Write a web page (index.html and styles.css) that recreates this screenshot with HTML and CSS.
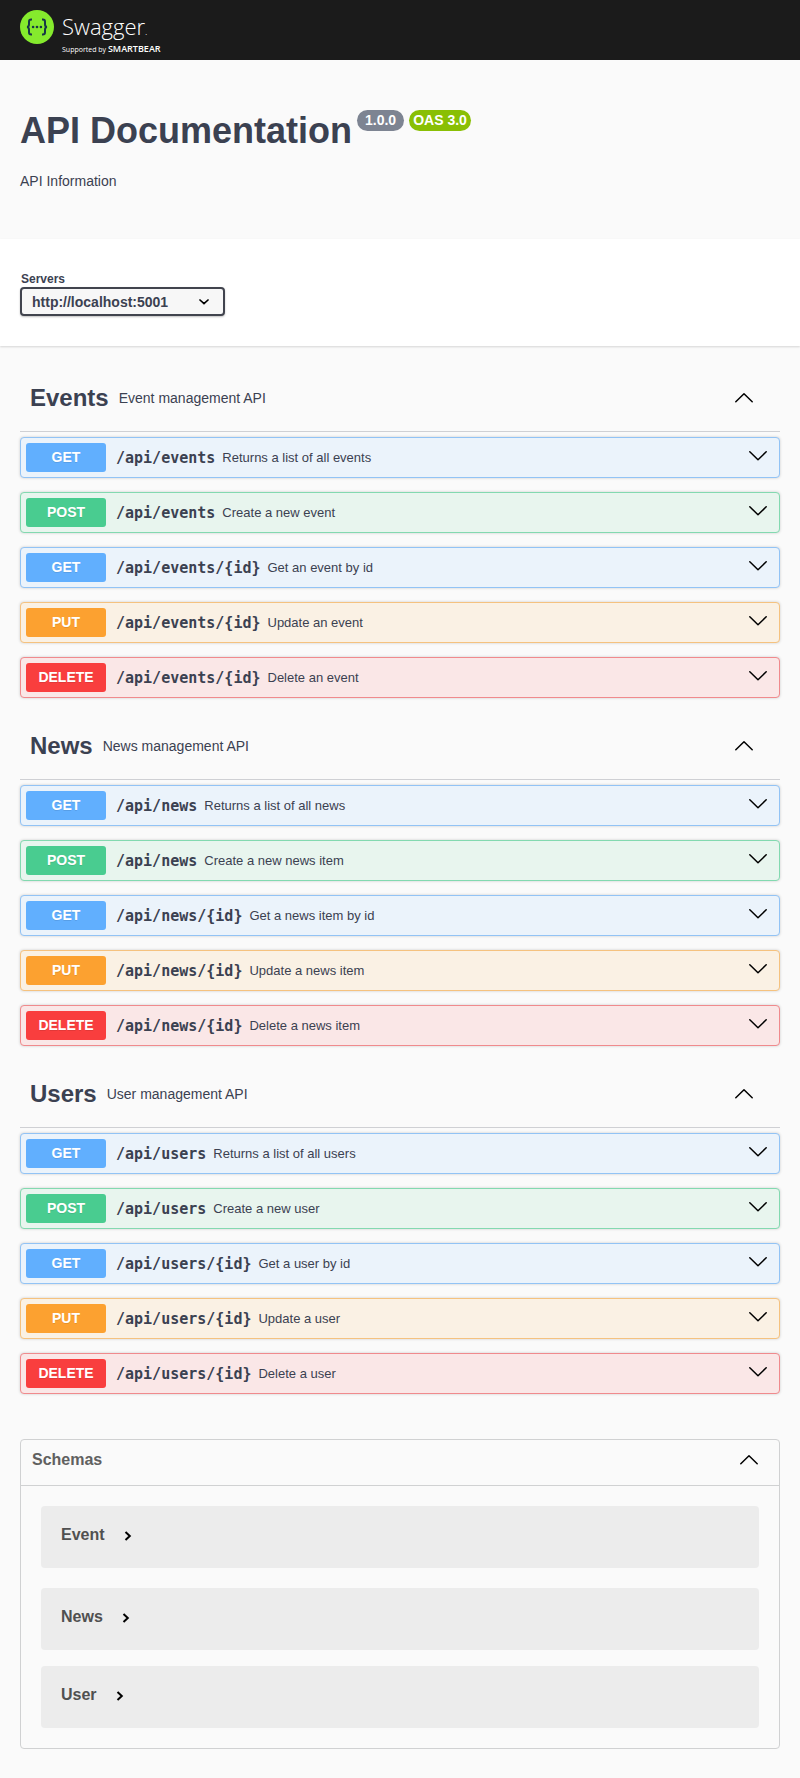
FILE: index.html
```html
<!DOCTYPE html>
<html lang="en">
<head>
<meta charset="utf-8">
<meta name="viewport" content="width=device-width, initial-scale=1">
<title>API Documentation</title>
<link rel="stylesheet" href="styles.css">
</head>
<body>
<svg class="sprite" aria-hidden="true">
  <symbol id="down" viewBox="0 0 20 20"><path d="M1.8 5.8 10 13.8 18.2 5.8" fill="none" stroke="#000" stroke-width="1.5" stroke-linecap="round" stroke-linejoin="round"/></symbol>
  <symbol id="up" viewBox="0 0 20 20"><path d="M1.8 13.8 10 5.8 18.2 13.8" fill="none" stroke="#000" stroke-width="1.5" stroke-linecap="round" stroke-linejoin="round"/></symbol>
  <symbol id="right" viewBox="0 0 10 10"><path d="M2.5 1 6.8 5 2.5 9" fill="none" stroke="#000" stroke-width="2"/></symbol>
</svg>

<header class="topbar">
  <a class="logo" href="#" aria-label="Swagger">
    <svg class="logo-mark" viewBox="0 0 34 34" aria-hidden="true">
      <circle cx="17" cy="17" r="17" fill="#85ea2d"/>
      <g fill="none" stroke="#173647" stroke-width="2">
        <path d="M12 9.5h-.8c-1.600 0-2.200.8-2.200 2.300v2.400c0 1.800-.6 2.700-2 2.800 1.400.1 2 1 2 2.800v2.400c0 1.500.6 2.300 2.200 2.300h.8"/>
        <path d="M22 9.500h.8c1.600 0 2.200.8 2.200 2.300v2.400c0 1.800.6 2.700 2 2.800-1.400.1-2 1-2 2.800v2.400c0 1.500-.6 2.300-2.200 2.300h-.8"/>
      </g>
      <g fill="#173647"><circle cx="13.100" cy="17" r="1.300"/><circle cx="17" cy="17" r="1.300"/><circle cx="20.900" cy="17" r="1.300"/></g>
    </svg>
    <span class="logo-text">
      <span class="logo-name">Swagger<span class="logo-dot">.</span></span>
      <span class="logo-by">Supported by <b class="logo-company">SMARTBEAR</b></span>
    </span>
  </a>
</header>

<main>
  <section class="info">
    <h1 class="title">API Documentation <span class="badges"><span class="badge">1.0.0</span><span class="badge badge-oas">OAS 3.0</span></span></h1>
    <p class="description">API Information</p>
  </section>

  <section class="servers">
    <label class="servers-label" for="server">Servers</label>
    <div class="select-box">
      <select class="select" id="server"><option>http://localhost:5001</option></select>
      <svg class="select-arrow" viewBox="0 0 10 6" aria-hidden="true"><path d="M1 1 5 4.700 9 1" fill="none" stroke="#000" stroke-width="1.700" stroke-linecap="round"/></svg>
    </div>
  </section>

  <div class="content">
    <section class="tag">
      <div class="tag-head">
        <h2 class="tag-name">Events</h2><p class="tag-text">Event management API</p>
        <button class="toggle" aria-label="Collapse Events"><svg class="chevron"><use href="#up"/></svg></button>
      </div>
      <div class="ops">
        <button class="op get"><span class="method">GET</span><span class="path">/api/events</span><span class="summary">Returns a list of all events</span><svg class="chevron"><use href="#down"/></svg></button>
        <button class="op post"><span class="method">POST</span><span class="path">/api/events</span><span class="summary">Create a new event</span><svg class="chevron"><use href="#down"/></svg></button>
        <button class="op get"><span class="method">GET</span><span class="path">/api/events/{id}</span><span class="summary">Get an event by id</span><svg class="chevron"><use href="#down"/></svg></button>
        <button class="op put"><span class="method">PUT</span><span class="path">/api/events/{id}</span><span class="summary">Update an event</span><svg class="chevron"><use href="#down"/></svg></button>
        <button class="op delete"><span class="method">DELETE</span><span class="path">/api/events/{id}</span><span class="summary">Delete an event</span><svg class="chevron"><use href="#down"/></svg></button>
      </div>
    </section>

    <section class="tag">
      <div class="tag-head">
        <h2 class="tag-name">News</h2><p class="tag-text">News management API</p>
        <button class="toggle" aria-label="Collapse News"><svg class="chevron"><use href="#up"/></svg></button>
      </div>
      <div class="ops">
        <button class="op get"><span class="method">GET</span><span class="path">/api/news</span><span class="summary">Returns a list of all news</span><svg class="chevron"><use href="#down"/></svg></button>
        <button class="op post"><span class="method">POST</span><span class="path">/api/news</span><span class="summary">Create a new news item</span><svg class="chevron"><use href="#down"/></svg></button>
        <button class="op get"><span class="method">GET</span><span class="path">/api/news/{id}</span><span class="summary">Get a news item by id</span><svg class="chevron"><use href="#down"/></svg></button>
        <button class="op put"><span class="method">PUT</span><span class="path">/api/news/{id}</span><span class="summary">Update a news item</span><svg class="chevron"><use href="#down"/></svg></button>
        <button class="op delete"><span class="method">DELETE</span><span class="path">/api/news/{id}</span><span class="summary">Delete a news item</span><svg class="chevron"><use href="#down"/></svg></button>
      </div>
    </section>

    <section class="tag">
      <div class="tag-head">
        <h2 class="tag-name">Users</h2><p class="tag-text">User management API</p>
        <button class="toggle" aria-label="Collapse Users"><svg class="chevron"><use href="#up"/></svg></button>
      </div>
      <div class="ops">
        <button class="op get"><span class="method">GET</span><span class="path">/api/users</span><span class="summary">Returns a list of all users</span><svg class="chevron"><use href="#down"/></svg></button>
        <button class="op post"><span class="method">POST</span><span class="path">/api/users</span><span class="summary">Create a new user</span><svg class="chevron"><use href="#down"/></svg></button>
        <button class="op get"><span class="method">GET</span><span class="path">/api/users/{id}</span><span class="summary">Get a user by id</span><svg class="chevron"><use href="#down"/></svg></button>
        <button class="op put"><span class="method">PUT</span><span class="path">/api/users/{id}</span><span class="summary">Update a user</span><svg class="chevron"><use href="#down"/></svg></button>
        <button class="op delete"><span class="method">DELETE</span><span class="path">/api/users/{id}</span><span class="summary">Delete a user</span><svg class="chevron"><use href="#down"/></svg></button>
      </div>
    </section>

    <section class="schemas">
      <h2 class="schemas-head"><button class="schemas-toggle">Schemas<svg class="chevron"><use href="#up"/></svg></button></h2>
      <div class="models">
        <div class="model"><button class="model-toggle">Event<svg class="arrow"><use href="#right"/></svg></button></div>
        <div class="model"><button class="model-toggle">News<svg class="arrow"><use href="#right"/></svg></button></div>
        <div class="model"><button class="model-toggle">User<svg class="arrow"><use href="#right"/></svg></button></div>
      </div>
    </section>
  </div>
</main>
</body>
</html>
```

FILE: styles.css
```css
* { box-sizing: border-box; }

body {
  margin: 0;
  background: #fafafa;
  color: #3b4151;
  font-family: "Liberation Sans", Arial, sans-serif;
}

h1, h2, p { margin: 0; }

button {
  margin: 0;
  padding: 0;
  border: 0;
  background: none;
  color: inherit;
  font: inherit;
  text-align: left;
  cursor: pointer;
}

.sprite { display: none; }

.topbar {
  height: 60px;
  padding: 10px 20px 0;
  background: #1b1b1b;
}

.logo {
  display: inline-flex;
  gap: 8px;
  color: #fff;
  font-family: "Open Sans", sans-serif;
  text-decoration: none;
}

.logo-mark { width: 34px; height: 34px; }

.logo-text { display: flex; flex-direction: column; padding-top: 3px; }

.logo-name {
  font-size: 22px;
  font-weight: 300;
  line-height: 26px;
}

.logo-dot { font-size: 10px; }

.logo-by {
  font-size: 7px;
  line-height: 10px;
  white-space: nowrap;
}

.logo-company { font-size: 9px; font-weight: 600; }

.info { padding: 49px 20px 50px; }

.title {
  display: flex;
  flex-wrap: wrap;
  gap: 5px;
  font-size: 36px;
  line-height: 44px;
}

.badges { display: flex; gap: 5px; padding-top: 1px; }

.badge {
  height: 21px;
  padding: 0 8px;
  border-radius: 12px;
  background: #7d8492;
  color: #fff;
  font-size: 14px;
  line-height: 20px;
}

.badge-oas { padding: 0 4px; background: #89bf04; }

.description {
  padding-top: 20px;
  font-size: 14px;
  line-height: 16px;
}

.servers {
  padding: 32px 20px 30px;
  background: #fff;
  box-shadow: 0 1px 2px rgba(0, 0, 0, .15);
}

.servers-label {
  display: block;
  padding-left: 1px;
  font-size: 12px;
  font-weight: 700;
  line-height: 16px;
}

.select-box {
  display: inline-grid;
  align-items: center;
  vertical-align: top;
}

.select {
  grid-area: 1 / 1;
  width: 205px;
  height: 29px;
  padding: 0 10px;
  border: 2px solid #41444e;
  border-radius: 4px;
  background: #f7f7f7;
  box-shadow: 0 1px 2px rgba(0, 0, 0, .25);
  color: #3b4151;
  font: 700 14px "Liberation Sans", Arial, sans-serif;
  appearance: none;
}

.select-arrow {
  grid-area: 1 / 1;
  justify-self: end;
  width: 10px;
  height: 6px;
  margin-right: 16px;
  pointer-events: none;
}

.content { padding: 19px 20px 30px; }

.tag { margin-bottom: 15px; }

.tag-head {
  display: flex;
  align-items: center;
  gap: 10px;
  height: 67px;
  margin-bottom: 5px;
  padding: 0 26px 0 10px;
  border-bottom: 1px solid #cfd0d4;
}

.tag-name { font-size: 24px; line-height: 28px; }

.tag-text { flex: 1; font-size: 14px; line-height: 20px; }

.chevron { display: block; width: 20px; height: 20px; }

.ops { display: flex; flex-direction: column; gap: 14px; }

.op {
  display: flex;
  align-items: center;
  padding: 5px;
  border: 1px solid;
  border-radius: 4px;
  box-shadow: 0 0 3px rgba(0, 0, 0, .19);
}

.op .chevron { margin: 0 6px 4px; }

.method {
  width: 80px;
  border-radius: 3px;
  color: #fff;
  font-size: 14px;
  font-weight: 700;
  line-height: 29px;
  text-align: center;
  text-shadow: 0 1px 0 rgba(0, 0, 0, .1);
}

.path {
  padding: 1px 7px 0 10px;
  font-family: "DejaVu Sans Mono", monospace;
  font-size: 15px;
  font-weight: 700;
  line-height: 20px;
}

.summary { flex: 1; font-size: 13px; line-height: 20px; }

.get { border-color: #92c3f5; background: #ebf3fb; }
.get .method { background: #61affe; }
.post { border-color: #83d9b0; background: #e8f5ee; }
.post .method { background: #49cc90; }
.put { border-color: #f5c27f; background: #faf1e4; }
.put .method { background: #fca130; }
.delete { border-color: #f08a8d; background: #fae7e7; }
.delete .method { background: #f93e3e; }

.schemas {
  margin-top: 45px;
  border: 1px solid #d0d1d2;
  border-radius: 4px;
}

.schemas-head {
  border-bottom: 1px solid #d0d1d2;
  color: #606060;
  font-size: 16px;
}

.schemas-toggle {
  display: flex;
  align-items: center;
  justify-content: space-between;
  width: 100%;
  height: 45px;
  padding: 0 20px 5px 11px;
}

.models {
  display: flex;
  flex-direction: column;
  gap: 16px;
  padding: 20px;
}

.model {
  padding: 19px 20px 23px;
  border-radius: 4px;
  background: #ececec;
  color: #505050;
  font-size: 16px;
  font-weight: 700;
  line-height: 20px;
}

.model:first-child { margin-bottom: 4px; }

.model-toggle { display: flex; align-items: center; gap: 18px; }

.arrow { width: 10px; height: 10px; margin-top: 2px; }
```
